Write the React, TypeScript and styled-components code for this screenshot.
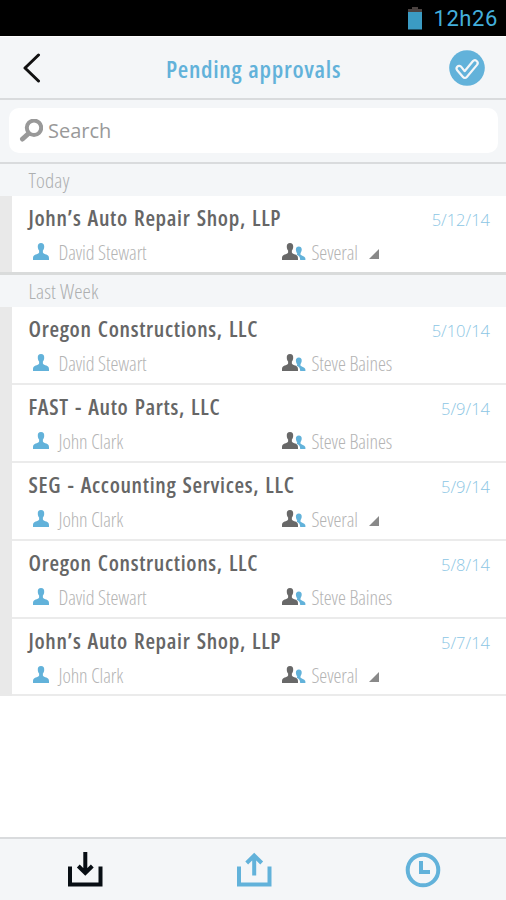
import React from "react";
import styled, { createGlobalStyle } from "styled-components";

const blue = "#62b2da";

const GlobalStyle = createGlobalStyle`
  * { box-sizing: border-box; }
  body { margin: 0; background: #fff; }
`;

const Screen = styled.div`
  display: flex;
  flex-direction: column;
  width: 506px;
  height: 900px;
  overflow: hidden;
  background: #fff;
  font-family: "Open Sans", sans-serif;
  white-space: nowrap;
  svg { display: block; flex: none; }
`;

const StatusBar = styled.div`
  display: flex;
  justify-content: flex-end;
  align-items: center;
  gap: 10px;
  height: 36px;
  padding: 1px 8px 0 0;
  background: #000;
  color: #43afdc;
  font: 400 22px/35px Roboto, sans-serif;
  letter-spacing: 0.6px;
`;

const Header = styled.header`
  display: grid;
  grid-template-columns: 60px 1fr 60px;
  align-items: center;
  height: 64px;
  padding: 0 21px 0 22px;
  background: #f4f6f8;
  border-top: 1px solid #fff;
  border-bottom: 2px solid #d9dbdd;
  svg:last-child { justify-self: end; }
`;

const PageTitle = styled.h1`
  margin: 0;
  padding-top: 2px;
  text-align: center;
  color: ${blue};
  font-size: 24px;
  font-weight: 600;
  font-stretch: 75%;
  font-kerning: none;
  letter-spacing: 0.7px;
  word-spacing: 1px;
  line-height: 32px;
`;

const SearchArea = styled.div`
  height: 64px;
  padding: 8px 8px 0 9px;
  background: #f4f6f8;
  border-bottom: 2px solid #d9dbdd;
`;

const SearchField = styled.div`
  display: flex;
  align-items: center;
  gap: 5px;
  height: 45px;
  padding-left: 10px;
  border-radius: 10px;
  background: #fff;
  color: #999;
  font-size: 20px;
`;

const GroupTitle = styled.h2`
  height: 32px;
  margin: 0;
  padding-left: 28.5px;
  background: #f4f6f8;
  color: #adafb0;
  font-size: 21px;
  font-weight: 300;
  font-stretch: 75%;
  letter-spacing: 0.1px;
  line-height: 33px;
`;

const Group = styled.div<{ $strong?: boolean }>`
  padding-left: 12px;
  background: #e9e9e9;
  border-bottom: ${(p) => (p.$strong ? "3px solid #d9dbdb" : "0")};
`;

const Row = styled.div<{ $height: number; $divider?: boolean }>`
  height: ${(p) => p.$height}px;
  padding: 6px 16px 0;
  background: #fff;
  border-bottom: ${(p) => (p.$divider ? "2px solid #ebebeb" : "0")};
`;

const RowTop = styled.div`
  display: flex;
  justify-content: space-between;
  height: 32px;
  line-height: 30px;
`;

const Company = styled.span`
  color: #666;
  font-size: 22px;
  font-weight: 600;
  font-stretch: 75%;
  font-kerning: none;
  letter-spacing: 0.65px;
  word-spacing: 1.6px;
  padding-left: 0.5px;
`;

const DateText = styled.span`
  color: #8cc6e4;
  font-size: 16.5px;
  font-weight: 300;
  line-height: 35px;
`;

const People = styled.div`
  display: grid;
  grid-template-columns: 254px 1fr;
  height: 36px;
`;

const Person = styled.div<{ $group?: boolean }>`
  display: flex;
  align-items: center;
  gap: ${(p) => (p.$group ? 5.5 : 10)}px;
  padding-left: ${(p) => (p.$group ? 0 : 4.5)}px;
  color: #b4b4b4;
  font-size: 20px;
  font-weight: 300;
  font-stretch: 75%;
  letter-spacing: -0.1px;
`;

const Corner = styled.svg`
  margin: 3px 0 0 5.5px;
`;

const TabBar = styled.nav`
  display: grid;
  grid-template-columns: repeat(3, 169px);
  justify-items: center;
  height: 63px;
  margin-top: auto;
  padding: 13px 0 0 0;
  border-top: 2px solid #d9dbdd;
  background: #f4f6f8;
`;

const body =
  "M8.500 0C11 0 12.100 1.600 11.900 4C11.800 5.700 11.200 6.700 10.500 7.600V9.400C11 10.700 12.600 11 14.200 11.600C16.400 12.400 17 13.300 17 15.500V17H0V15.500C0 13.300 0.600 12.400 2.800 11.600C4.400 11 6 10.700 6.500 9.400V7.600C5.800 6.700 5.200 5.700 5.100 4C4.900 1.600 6 0 8.500 0Z";

const PersonSvg = styled.svg`
  margin-bottom: 1px;
`;

const UserIcon = () => (
  <PersonSvg width="16" height="17" viewBox="0 0 17 17" preserveAspectRatio="none">
    <path fill={blue} d={body} />
  </PersonSvg>
);

const UsersIcon = () => (
  <PersonSvg width="24" height="17" viewBox="0 0 24 17">
    <path fill="#686868" transform="scale(.94 1)" d={body} />
    <path
      fill={blue}
      d="M16.800 3.500C18.800 3.500 20 5 19.700 7C19.500 8.500 19 9.300 18.500 10.200V11.600C19.200 12.900 23.400 13.300 23.400 15.700V17H18.200C18.200 14 16.800 12.500 14.600 11.700C15.100 11.300 15.200 10.900 15.200 10.200C14.600 9.500 14.100 8.600 13.900 7C13.700 5 14.800 3.500 16.800 3.500Z"
    />
  </PersonSvg>
);

type Item = { company: string; date: string; author: string; approver: string; height: number };

const ApprovalRow = ({ item, divider }: { item: Item; divider?: boolean }) => (
  <Row $height={item.height} $divider={divider}>
    <RowTop>
      <Company>{item.company}</Company>
      <DateText>{item.date}</DateText>
    </RowTop>
    <People>
      <Person><UserIcon />{item.author}</Person>
      <Person $group>
        <UsersIcon />{item.approver}
        {item.approver === "Several" && (
          <Corner width="10" height="10" viewBox="0 0 10 10"><path fill="#898989" d="M10 0V10H0Z" /></Corner>
        )}
      </Person>
    </People>
  </Row>
);

const today: Item = { company: "John’s Auto Repair Shop, LLP", date: "5/12/14", author: "David Stewart", approver: "Several", height: 76 };

const lastWeek: Item[] = [
  { company: "Oregon Constructions, LLC", date: "5/10/14", author: "David Stewart", approver: "Steve Baines", height: 78 },
  { company: "FAST - Auto Parts, LLC", date: "5/9/14", author: "John Clark", approver: "Steve Baines", height: 78 },
  { company: "SEG - Accounting Services, LLC", date: "5/9/14", author: "John Clark", approver: "Several", height: 78 },
  { company: "Oregon Constructions, LLC", date: "5/8/14", author: "David Stewart", approver: "Steve Baines", height: 78 },
  { company: "John’s Auto Repair Shop, LLP", date: "5/7/14", author: "John Clark", approver: "Several", height: 77 },
];

export default function App() {
  return (
    <Screen>
      <GlobalStyle />
      <StatusBar>
        <svg width="16" height="23" viewBox="0 0 16 23">
          <path fill="#4a4240" d="M5 0H11V2H15V5H1V2H5Z" />
          <path fill="#3b9bc3" d="M1 5H15V22.500H1Z" />
        </svg>
        <span>12h26</span>
      </StatusBar>
      <Header>
        <svg width="20" height="30" viewBox="0 0 20 30">
          <path d="M16.500 2L3 15L16.500 28" fill="none" stroke="#111" strokeWidth="3" strokeLinecap="round" strokeLinejoin="round" />
        </svg>
        <PageTitle>Pending approvals</PageTitle>
        <svg width="36" height="36" viewBox="0 0 36 36">
          <circle cx="18" cy="18" r="17.800" fill={blue} />
          <path
            d="M8.200 16.800C9.400 15.500 11.400 15.700 12.500 17.100L15.600 21.200L23.800 11.300C24.900 10 26.500 10 27.700 11C29 12.100 29.100 13.500 28 14.900L17.800 27C16.700 28.200 15 28.200 14 27L8.200 20.200C7.300 19.100 7.200 17.900 8.200 16.800Z"
            fill="none" stroke="#f4f6f8" strokeWidth="2.200" strokeLinejoin="round"
          />
        </svg>
      </Header>
      <SearchArea>
        <SearchField>
          <svg width="24" height="24" viewBox="0 0 24 24" fill="none" stroke="#999" strokeLinecap="round">
            <circle cx="15" cy="8.800" r="7.200" strokeWidth="4" />
            <path d="M9 15L3.500 20" strokeWidth="5" />
          </svg>
          <span>Search</span>
        </SearchField>
      </SearchArea>
      <GroupTitle>Today</GroupTitle>
      <Group $strong><ApprovalRow item={today} /></Group>
      <GroupTitle>Last Week</GroupTitle>
      <Group>
        {lastWeek.map((item) => <ApprovalRow key={item.company + item.date} item={item} divider />)}
      </Group>
      <TabBar>
        <svg width="36" height="36" viewBox="0 0 36 36" fill="none" stroke="#080e14" strokeWidth="4">
          <path d="M3 14.500V32.500H33.500V14.500" />
          <path d="M18.300 0V21M11.300 14L18.300 21L25.300 14" />
        </svg>
        <svg width="36" height="36" viewBox="0 0 36 36" fill="none" stroke={blue} strokeWidth="4">
          <path d="M3 14.500V32.500H33.500V14.500" />
          <path d="M18.200 23.500V3M10.700 11L18.200 3.500L25.700 11" />
        </svg>
        <svg width="36" height="36" viewBox="0 0 36 36" fill="none" stroke={blue} strokeWidth="4">
          <circle cx="18" cy="18" r="15.300" />
          <path d="M16 9V20H25" />
        </svg>
      </TabBar>
    </Screen>
  );
}
